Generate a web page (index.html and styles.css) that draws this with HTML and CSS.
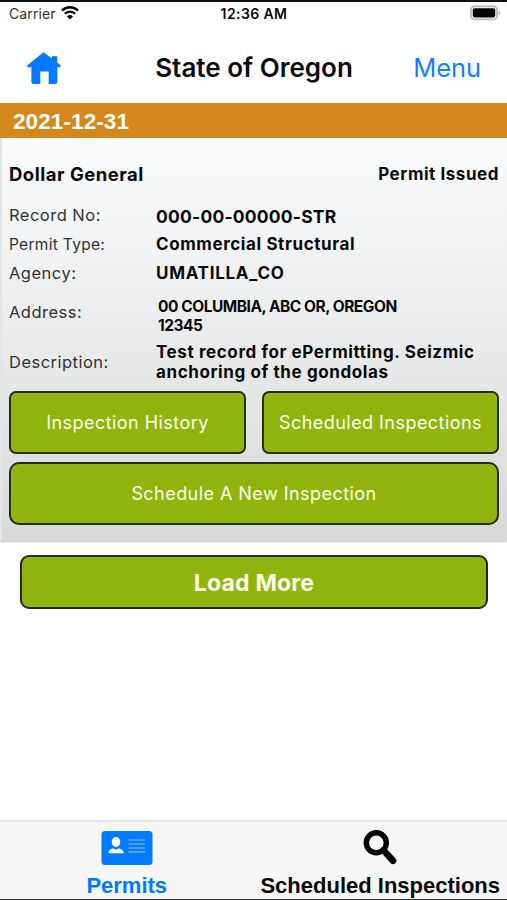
FILE: index.html
```
<!DOCTYPE html>
<html lang="en">
<head>
    <meta charset="UTF-8">
    <meta name="viewport" content="width=device-width, initial-scale=1.0">
    <title>State of Oregon - Permits</title>
    <link rel="stylesheet" href="styles.css">
</head>
<body>
    <div class="app">
        <!-- Status Bar -->
        <div class="status-bar">
            <div class="carrier">
                <span>Carrier</span>
                <svg class="wifi" width="18" height="14" viewBox="0 0 18 14">
                    <path d="M1 4.6a11.4 11.4 0 0 1 16 0" fill="none" stroke="#000" stroke-width="2.5"/>
                    <path d="M3.8 7.8a7.3 7.3 0 0 1 10.4 0" fill="none" stroke="#000" stroke-width="2.3"/>
                    <path d="M6 10.4a4.3 4.3 0 0 1 6 0L9 13.6z" fill="#000"/>
                </svg>
            </div>
            <div class="clock">12:36 AM</div>
            <svg class="battery" width="32" height="16" viewBox="0 0 32 16">
                <rect x="2" y="1.4" width="26" height="13" rx="3.6" fill="#fff" stroke="#b9b9b9" stroke-width="1.8"/>
                <rect x="3.8" y="3.2" width="22.4" height="9.4" rx="2" fill="#000"/>
                <path d="M29.5 5.6c2.6 1 2.6 3.6 0 4.6z" fill="#b9b9b9"/>
            </svg>
        </div>

        <!-- Header -->
        <div class="header">
            <a class="home" href="#">
                <svg width="36" height="34" viewBox="0 0 36 34">
                    <path d="M17.5 1.2 26 7.6V5.2h5.2v6.4l4 3.2-1.8 1.8-2-.9v14.8q0 2.5-2.5 2.5h-6.2V20.5h-8.4V33H8q-2.6 0-2.6-2.5V15.7l-2.6 1.1-2-2z" fill="#007aff"/>
                </svg>
            </a>
            <h1>State of Oregon</h1>
            <a class="menu" href="#">Menu</a>
        </div>

        <div class="date-bar">2021-12-31</div>

        <!-- Permit Card -->
        <div class="card">
            <div class="card-head">
                <span class="name">Dollar General</span>
                <span class="status">Permit Issued</span>
            </div>
            <div class="details">
                <div class="row record">
                    <span class="label">Record No:</span>
                    <span class="value">000-00-00000-STR</span>
                </div>
                <div class="row type">
                    <span class="label">Permit Type:</span>
                    <span class="value">Commercial Structural</span>
                </div>
                <div class="row agency">
                    <span class="label">Agency:</span>
                    <span class="value">UMATILLA_CO</span>
                </div>
                <div class="row address">
                    <span class="label">Address:</span>
                    <span class="value">00 COLUMBIA, ABC OR, OREGON<br>12345</span>
                </div>
                <div class="row description">
                    <span class="label">Description:</span>
                    <span class="value">Test record for ePermitting. Seizmic<br>anchoring of the gondolas</span>
                </div>
            </div>
            <div class="actions">
                <button class="btn history">Inspection History</button>
                <button class="btn scheduled">Scheduled Inspections</button>
                <button class="btn wide">Schedule A New Inspection</button>
            </div>
        </div>

        <button class="btn load-more">Load More</button>

        <!-- Tab Bar -->
        <div class="tab-bar">
            <a class="tab active" href="#">
                <svg width="52" height="36" viewBox="0 0 52 36">
                    <rect x=".5" y="1" width="51" height="34" rx="3.5" fill="#007aff"/>
                    <ellipse cx="15" cy="12" rx="4.3" ry="5" fill="#fff"/>
                    <path d="M7.5 23.2q.2-3.7 3.6-4.5l1.6-.3 2.3 1.5 2.3-1.5 1.6.3q3.5.8 3.7 4.5z" fill="#fff"/>
                    <path d="M27.5 10h16.5M27.5 14h16.5M27.5 18h16.5M27.5 21.8h16.5" stroke="#5fabff" stroke-width="1.7"/>
                </svg>
                <span>Permits</span>
            </a>
            <a class="tab" href="#">
                <svg width="34" height="36" viewBox="0 0 34 36">
                    <circle cx="13.3" cy="12.8" r="10" fill="none" stroke="#000" stroke-width="5.4"/>
                    <path d="M20.5 20.3 30 30.7" stroke="#000" stroke-width="6.6" stroke-linecap="round"/>
                </svg>
                <span>Scheduled Inspections</span>
            </a>
        </div>
    </div>
</body>
</html>
```
FILE: styles.css
```
/* Base Styles */
* {
    box-sizing: border-box;
}

body {
    margin: 0;
    font-family: Inter, sans-serif;
    background-color: #fff;
    color: #0a0a0a;
}

a {
    text-decoration: none;
    color: inherit;
}

svg {
    display: block;
}

.app {
    display: flex;
    flex-direction: column;
    height: 900px;
    border-top: 2px solid #111;
    border-bottom: 1px solid #333;
    overflow: hidden;
    white-space: nowrap;
}

/* Status Bar */
.status-bar {
    display: grid;
    grid-template-columns: 1fr auto 1fr;
    align-items: center;
    height: 22px;
    padding: 0 6px 0 9px;
}

.carrier {
    display: flex;
    align-items: center;
    gap: 5px;
    font-size: 14px;
    letter-spacing: 0.1px;
    color: #333;
}

.clock {
    font-size: 14px;
    font-weight: 600;
    letter-spacing: 0.4px;
    margin-left: -2px;
}

.battery {
    justify-self: end;
}

/* Header */
.header {
    display: grid;
    grid-template-columns: 1fr auto 1fr;
    align-items: center;
    height: 79px;
    padding: 8px 26px 0 26px;
}

.header h1 {
    margin: 0 0 0 1px;
    font-size: 26px;
    font-weight: 600;
}

.menu {
    justify-self: end;
    font-size: 25.5px;
    letter-spacing: -0.1px;
    color: #157efb;
}

.date-bar {
    height: 35px;
    padding-left: 13px;
    font: bold 22.5px/37px "Liberation Sans", sans-serif;
    letter-spacing: 0.1px;
    color: #fff;
    background-color: #d4881c;
}

/* Permit Card */
.card {
    height: 403px;
    padding: 20px 8px 0 9px;
    background: linear-gradient(#f9fbfc, #f1f2f3 30%, #d8d8d8);
    box-shadow: inset 2px 0 #e4e5e6, 0 1px 2px #bbb;
}

.card-head {
    display: flex;
    justify-content: space-between;
    align-items: center;
    height: 32px;
}

.name {
    font-size: 18.5px;
    font-weight: 700;
    letter-spacing: 0.5px;
}

.status {
    font-size: 17px;
    font-weight: 700;
    letter-spacing: 0.55px;
}

.row {
    display: grid;
    grid-template-columns: 147px 1fr;
    align-items: center;
    height: 29px;
}

.label {
    font-size: 16.5px;
    letter-spacing: 0.48px;
    color: #333;
}

.value {
    font-size: 17px;
    line-height: 20px;
    font-weight: 700;
    letter-spacing: 0.6px;
}

.record {
    margin-top: 10px;
}

.record .value {
    padding-top: 4px;
    font-size: 17.5px;
    letter-spacing: 0.2px;
}

.type .label {
    padding-top: 2px;
    font-size: 15.5px;
    letter-spacing: 0.3px;
}

.agency .value {
    letter-spacing: 0.72px;
}

.address {
    height: 51px;
}

.address .label {
    padding-bottom: 2px;
}

.description {
    height: 48px;
}

.address .value {
    padding: 6px 0 0 2px;
    font-size: 15.5px;
    line-height: 19px;
    letter-spacing: -0.47px;
}

/* Buttons */
.actions {
    display: grid;
    grid-template-columns: 237px 237px;
    justify-content: space-between;
    row-gap: 8px;
    margin-top: 5px;
}

.btn {
    height: 63px;
    padding: 0;
    border: 2px solid #26300f;
    border-radius: 7px;
    font-family: Inter, sans-serif;
    font-size: 18px;
    letter-spacing: 0.45px;
    color: #fbffe9;
    background-color: #91b40f;
}

.wide {
    grid-column: span 2;
    border-radius: 10px;
    border-color: #222b22;
}

.load-more {
    height: 54px;
    margin: 14px 19px 0 20px;
    padding-top: 1px;
    border-color: #222b22;
    border-radius: 9px;
    font-size: 23px;
    font-weight: 700;
    letter-spacing: 0.2px;
}

/* Tab Bar */
.tab-bar {
    display: grid;
    grid-template-columns: 1fr 1fr;
    height: 79px;
    margin-top: auto;
    padding-top: 8px;
    border-top: 2px solid #e6e6e6;
    background-color: #f6f6f6;
}

.tab {
    display: flex;
    flex-direction: column;
    align-items: center;
    gap: 7px;
    font: bold 22px/26px "Liberation Sans", sans-serif;
    color: #0a0a0a;
}

.active {
    color: #007aff;
}
```
